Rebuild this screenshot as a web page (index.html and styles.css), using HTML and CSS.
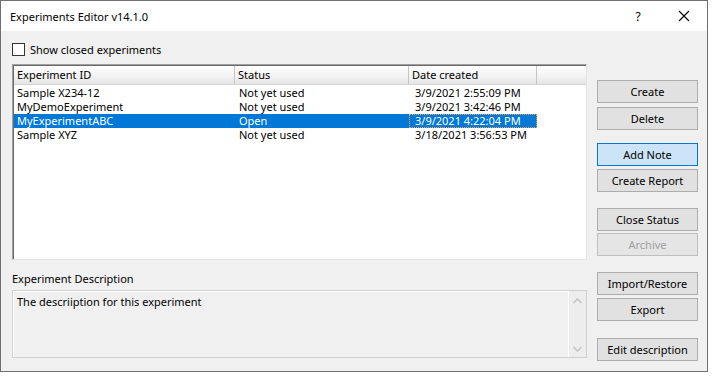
FILE: index.html
```html
<!DOCTYPE html>
<html lang="en">
<head>
    <meta charset="UTF-8">
    <title>Experiments Editor v14.1.0</title>
    <link rel="stylesheet" href="styles.css">
</head>
<body>
<div class="window">
    <div class="titlebar">
        <span class="title">Experiments Editor v14.1.0</span>
        <span class="help">?</span>
        <span class="close">
            <svg width="12" height="12" viewBox="0 0 12 12"><path d="M1 1 L11 11 M11 1 L1 11" stroke="#000" stroke-width="1.1" fill="none"/></svg>
        </span>
    </div>

    <div class="client">
        <div class="main">
            <div class="check">
                <span class="box"></span>
                <span>Show closed experiments</span>
            </div>

            <!-- list of experiments -->
            <div class="listview">
                <div class="lv-header">
                    <div class="col col-id">Experiment ID</div>
                    <div class="col col-status">Status</div>
                    <div class="col col-date">Date created</div>
                    <div class="col col-rest"></div>
                </div>
                <div class="lv-row">
                    <div class="cell col-id">Sample X234-12</div>
                    <div class="cell col-status">Not yet used</div>
                    <div class="cell col-date">3/9/2021 2:55:09 PM</div>
                </div>
                <div class="lv-row">
                    <div class="cell col-id">MyDemoExperiment</div>
                    <div class="cell col-status">Not yet used</div>
                    <div class="cell col-date">3/9/2021 3:42:46 PM</div>
                </div>
                <div class="lv-row selected">
                    <div class="cell col-id">MyExperimentABC</div>
                    <div class="cell col-status">Open</div>
                    <div class="cell col-date focus">3/9/2021 4:22:04 PM</div>
                </div>
                <div class="lv-row">
                    <div class="cell col-id">Sample XYZ</div>
                    <div class="cell col-status">Not yet used</div>
                    <div class="cell col-date">3/18/2021 3:56:53 PM</div>
                </div>
            </div>

            <div class="desc-label">Experiment Description</div>
            <div class="textbox">
                <div class="textbox-text">The descriiption for this experiment</div>
                <div class="scrollbar">
                    <svg width="9" height="6" viewBox="0 0 9 6"><path d="M0.5 5 L4.5 1 L8.5 5" stroke="#c2c2c2" stroke-width="1.5" fill="none"/></svg>
                    <svg width="9" height="6" viewBox="0 0 9 6"><path d="M0.5 1 L4.5 5 L8.5 1" stroke="#c2c2c2" stroke-width="1.5" fill="none"/></svg>
                </div>
            </div>
        </div>

        <div class="buttons">
            <div class="group">
                <button>Create</button>
                <button>Delete</button>
            </div>
            <div class="group">
                <button class="active">Add Note</button>
                <button>Create Report</button>
            </div>
            <div class="group">
                <button>Close Status</button>
                <button class="disabled">Archive</button>
            </div>
            <div class="group">
                <button>Import/Restore</button>
                <button>Export</button>
            </div>
            <div class="group">
                <button>Edit description</button>
            </div>
        </div>
    </div>
</div>
</body>
</html>
```

FILE: styles.css
```css
body {
    margin: 0;
    background: #fff;
    font-family: "Noto Sans", "Open Sans", sans-serif;
    font-size: 11px;
    color: #000;
}

.window {
    width: 708px;
    height: 372px;
    box-sizing: border-box;
    border: 1px solid #707070;
    background: #f0f0f0;
    display: flex;
    flex-direction: column;
    overflow: hidden;
}

.titlebar {
    flex-shrink: 0;
    height: 30px;
    background: #fff;
    display: flex;
    align-items: center;
    padding-left: 9px;
}

.title {
    flex: 1;
    font-size: 11px;
    margin-top: 1px;
}

.help {
    width: 46px;
    text-align: center;
    font-size: 12px;
}

.close {
    width: 46px;
    display: flex;
    justify-content: center;
}

.client {
    flex-shrink: 0;
    display: flex;
    padding-left: 11px;
}

.main {
    width: 575px;
    display: flex;
    flex-direction: column;
}

.check {
    display: flex;
    align-items: center;
    margin-top: 12px;
    height: 13px;
}

.check .box {
    width: 11px;
    height: 11px;
    border: 1px solid #333;
    background: #fff;
    margin-right: 5px;
}

.listview {
    margin-top: 8px;
    height: 196px;
    box-sizing: border-box;
    background: #fff;
    border-top: 1px solid #a0a0a0;
    border-left: 1px solid #a0a0a0;
    border-right: 1px solid #e3e3e3;
    border-bottom: 1px solid #e3e3e3;
    box-shadow: inset 1px 1px 0 #696969;
    padding: 1px 0 0 1px;
}

.lv-header {
    display: flex;
    height: 18px;
    background: linear-gradient(#ffffff, #f2f2f2 60%, #e4e4e4);
    border-bottom: 1px solid #d5d5d5;
}

.col {
    box-sizing: border-box;
    padding-left: 3px;
    line-height: 18px;
    border-right: 1px solid #c5c5c5;
}

.col-id { width: 221px; }
.col-status { width: 174px; }
.col-date { width: 128px; }
.col-rest { flex: 1; border-right: none; }

.lv-row {
    display: flex;
    height: 14px;
    line-height: 14px;
}

.lv-header + .lv-row {
    margin-top: 1px;
}

.cell {
    box-sizing: border-box;
    padding-left: 3px;
    white-space: nowrap;
}

.cell.col-status { padding-left: 4px; }
.cell.col-date { padding-left: 6px; }

.lv-row.selected {
    width: 523px;
    background: #0078d7;
    color: #fff;
}

.cell.focus {
    border: 1px dotted #f2a24a;
    line-height: 12px;
    padding-left: 5px;
}

.desc-label {
    margin-top: 11px;
    line-height: 16px;
}

.textbox {
    margin-top: 3px;
    height: 68px;
    box-sizing: border-box;
    border: 1px solid #d0d0d0;
    box-shadow: inset 1px 1px 0 #fff;
    display: flex;
}

.textbox-text {
    flex: 1;
    padding: 3px 4px;
}

.scrollbar {
    width: 17px;
    border-left: 1px solid #fff;
    background: #ededed;
    display: flex;
    flex-direction: column;
    justify-content: space-between;
    align-items: center;
    padding: 7px 0 5px;
}

.buttons {
    margin-left: 10px;
    padding-top: 49px;
    display: flex;
    flex-direction: column;
}

.group {
    display: flex;
    flex-direction: column;
    gap: 3px;
    margin-bottom: 16px;
}

.group:first-child {
    gap: 4px;
    margin-bottom: 13px;
}

.group:nth-child(3) {
    gap: 2px;
}

.group:nth-child(4) {
    margin-bottom: 17px;
}

button {
    width: 101px;
    height: 23px;
    font-family: inherit;
    font-size: 11px;
    line-height: 20px;
    color: #000;
    background: #e1e1e1;
    border: 1px solid #adadad;
    padding: 0;
}

button.active {
    background: #cce4f7;
    border-color: #0078d7;
}

button.disabled {
    color: #a0a0a0;
    border-color: #bfbfbf;
    background: #e5e5e5;
}
```
